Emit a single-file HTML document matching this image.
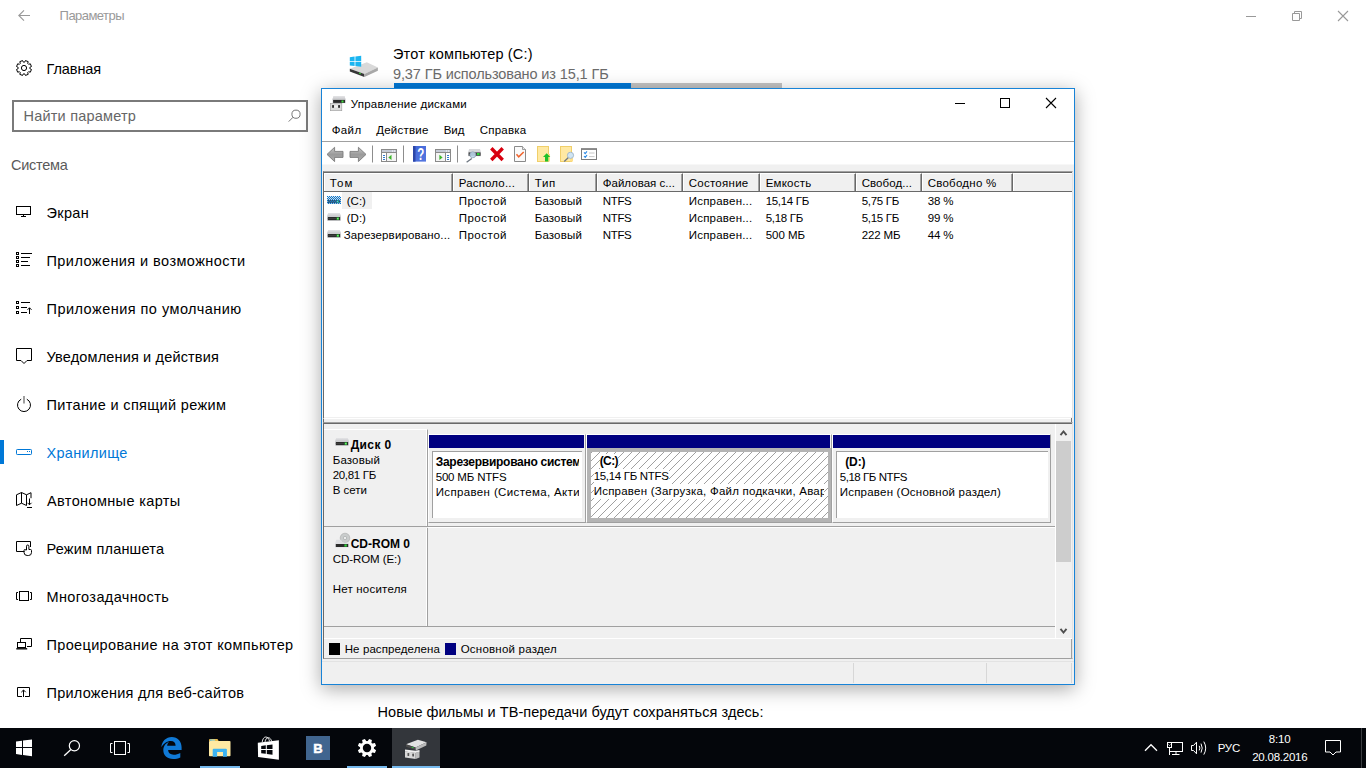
<!DOCTYPE html>
<html><head><meta charset="utf-8">
<style>
*{box-sizing:border-box;margin:0;padding:0}
html,body{width:1366px;height:768px;overflow:hidden;background:#fff;font-family:"Liberation Sans",sans-serif;}
.a{position:absolute;white-space:nowrap}
.t{position:absolute;white-space:nowrap;overflow:visible}
.n{font-size:14.5px;color:#000;line-height:20px;height:20px;margin-top:1px}
.d{font-size:11.5px;color:#000;line-height:15px;height:15px}
.b{font-weight:bold;font-size:12px}
svg{position:absolute;overflow:visible}
</style></head><body>
<!-- SETTINGS -->
<div class="t" style="left: 59.6px; top: 8px; font-size: 13px; color: rgb(153, 153, 153); line-height: 16px; letter-spacing: -0.54px;">Параметры</div>
<div class="t n" style="left: 46.5px; top: 58px; letter-spacing: -0.08px;">Главная</div>
<div class="a" style="left:12px;top:100px;width:296px;height:32px;border:2px solid #7a7a7a"></div>
<div class="t n" style="left: 23.5px; top: 105px; color: rgb(102, 102, 102); letter-spacing: 0.21px;">Найти параметр</div>
<div class="t n" style="left: 11px; top: 154px; color: rgb(90, 90, 90); letter-spacing: -0.25px;">Система</div>
<div class="t n" style="left: 46.5px; top: 202px; letter-spacing: 0.34px;">Экран</div>
<div class="t n" style="left: 46.5px; top: 250px; letter-spacing: 0.43px;">Приложения и возможности</div>
<div class="t n" style="left: 46.5px; top: 298px; letter-spacing: 0.47px;">Приложения по умолчанию</div>
<div class="t n" style="left: 46.5px; top: 346px; letter-spacing: 0.16px;">Уведомления и действия</div>
<div class="t n" style="left: 46.5px; top: 394px; letter-spacing: 0.34px;">Питание и спящий режим</div>
<div class="t n" style="left: 46.5px; top: 442px; color: rgb(0, 120, 215); letter-spacing: 0.31px;">Хранилище</div>
<div class="a" style="left:0;top:440px;width:4px;height:24px;background:#0078d7"></div>
<div class="t n" style="left: 47px; top: 490px; letter-spacing: 0.37px;">Автономные карты</div>
<div class="t n" style="left: 46.5px; top: 538px; letter-spacing: 0.2px;">Режим планшета</div>
<div class="t n" style="left: 46.5px; top: 586px; letter-spacing: 0.37px;">Многозадачность</div>
<div class="t n" style="left: 46.5px; top: 634px; letter-spacing: 0.35px;">Проецирование на этот компьютер</div>
<div class="t n" style="left: 46.5px; top: 682px; letter-spacing: 0.23px;">Приложения для веб-сайтов</div>
<!-- content -->
<div class="t n" style="left: 393px; top: 43px; letter-spacing: 0.16px;">Этот компьютер (C:)</div>
<div class="t n" style="left: 393px; top: 63px; color: rgb(107, 107, 107); letter-spacing: -0.12px;">9,37 ГБ использовано из 15,1 ГБ</div>
<div class="a" style="left:394px;top:83px;width:388px;height:5px;background:#c4c4c4"></div>
<div class="a" style="left:394px;top:83px;width:237px;height:5px;background:#0078d7"></div>
<div class="t n" style="left: 377.5px; top: 701px; letter-spacing: 0.06px;">Новые фильмы и ТВ-передачи будут сохраняться здесь:</div>
<!-- settings icons -->
<style>.k path,.k rect,.k circle{fill:none;stroke:#000;stroke-width:1}</style>
<svg style="left:18px;top:10px" width="13" height="12"><path d="M12 5.5H.8M6 .3L.8 5.500 6 10.700" stroke="#999" fill="none" stroke-width="1.100"></path></svg>
<svg class="k" style="left:16px;top:60px" width="16" height="16"><path d="M8.650 2.140L9.480 .550L12.220 1.680L11.690 3.400L12.600 4.310L14.320 3.780L15.450 6.520L13.860 7.350L13.860 8.650L15.450 9.480L14.320 12.220L12.600 11.690L11.690 12.600L12.220 14.320L9.480 15.450L8.650 13.860L7.350 13.860L6.520 15.450L3.780 14.320L4.310 12.600L3.400 11.690L1.680 12.220L.550 9.480L2.140 8.650L2.140 7.350L.550 6.520L1.680 3.780L3.400 4.310L4.310 3.400L3.780 1.680L6.520 .550L7.350 2.140z" stroke-linejoin="round"></path><circle cx="8" cy="8" r="2.600"></circle></svg>
<svg style="left:288px;top:109px" width="14" height="14"><circle cx="8" cy="5.200" r="4.100" stroke="#777" fill="none"></circle><path d="M5.100 8.200L.7 12.600" stroke="#777" fill="none"></path></svg>
<!-- settings window controls -->
<svg style="left:1246px;top:10px" width="105" height="13"><path d="M0 6.500H10" stroke="#999" fill="none"></path><path d="M46.500 3.500h7v7h-7zM48.500 3.500v-2h7v7h-2" stroke="#999" fill="none"></path><path d="M92 1l10 10M102 1l-10 10" stroke="#999" fill="none" stroke-width="1.100"></path></svg>
<!-- nav icons -->
<svg class="k" style="left:16px;top:206px" width="16" height="12"><rect x=".5" y=".5" width="14" height="8"></rect><path d="M7.500 8.500v2M5 10.500h5"></path></svg>
<svg class="k" style="left:16px;top:252px" width="16" height="16"><rect x=".5" y=".5" width="2" height="2"></rect><rect x=".5" y="4.500" width="2" height="2"></rect><rect x=".5" y="8.500" width="2" height="2"></rect><rect x=".5" y="12.500" width="2" height="2"></rect><path d="M5 1.500h11M5 5.500h9M5 9.500h7M5 13.500h9"></path></svg>
<svg class="k" style="left:16px;top:301px" width="16" height="14"><rect x=".5" y=".5" width="2" height="2"></rect><rect x=".5" y="5.500" width="2" height="2"></rect><rect x=".5" y="10.500" width="2" height="2"></rect><path d="M5 1.500h9M5 6.500h6M5 11.500h6M13.500 13V6.800M11.500 8.800l2-2 2 2"></path></svg>
<svg class="k" style="left:16px;top:348px" width="16" height="16"><path d="M.5.500h15v12h-4.500l-3 3-3-3h-4.500z"></path></svg>
<svg class="k" style="left:16px;top:396px" width="16" height="17"><path d="M5.200 3.200A6.500 6.500 0 1 0 10.800 3.200"></path><path d="M8 0v7.600" style="stroke:#777;stroke-width:1.400"></path></svg>
<svg style="left:16px;top:449px" width="16" height="7"><rect x=".5" y=".5" width="15" height="5" rx=".8" stroke="#0078d7" fill="none"></rect><path d="M11 2.500h1M13 2.500h1" stroke="#0078d7" fill="none"></path></svg>
<svg class="k" style="left:16px;top:492px" width="16" height="16"><path d="M.5 2.800L5.500.5l5 2.300 4.500-2.100v5.500M.5 2.800v10.700l5-2.300 5 2.300M5.500.5v10.700M10.500 2.800v10.700"></path><path d="M13.500 6.500v6.300M11.500 10.800l2 2 2-2M11 15.500h5"></path></svg>
<svg class="k" style="left:16px;top:541px" width="16" height="15"><path d="M8.500 10.500H.5V.5h14v5.500"></path><path d="M10.500 9V5.200a1.200 1.200 0 0 1 2.400 0V8.500h1.600a1 1 0 0 1 1 1v2a3 3 0 0 1-3 3h-1.300a3.200 3.200 0 0 1-3.200-3.200V9.500a1 1 0 0 1 2 0"></path></svg>
<svg class="k" style="left:16px;top:591px" width="16" height="10"><rect x="3.500" y=".5" width="9" height="9"></rect><path d="M2 1.500H.5v7H2M14 1.500h1.500v7H14"></path></svg>
<svg class="k" style="left:16px;top:638px" width="16" height="12"><path d="M4.500 4V.5h11v8H11"></path><rect x="1.500" y="4.500" width="8" height="5"></rect><path d="M.3 10.800h10.900" style="stroke-width:1.400"></path></svg>
<svg class="k" style="left:17px;top:687px" width="13" height="10"><path d="M5 9.500H.5v-9h12v9H8M6.500 10V3.200M4.300 5.200l2.200-2.200 2.200 2.200"></path></svg>
<!-- drive icon -->
<svg style="left:349px;top:54px" width="30" height="24"><path fill="#d9d9d9" d="M.8 14.700L17.800 8.200 28.900 13.500 15.400 20z"></path><path fill="#1ab5f1" d="M.8 3.300l4.800-.7V7H.8zM6.400 2.500l5.800-.7V7H6.400zM.8 7.800h4.800V12l-4.800-.6zM6.400 7.800h5.800v5l-5.800-.7z"></path><path fill="#383838" d="M.8 14.700L15.400 20v2.900L.8 17.600z"></path><path fill="#a9a9a9" d="M15.400 20L28.900 13.500v3.200L15.400 22.900z"></path><rect x="10" y="18.800" width="1.800" height="1.100" fill="#3d3" transform="rotate(20 10.900 19.300)"></rect></svg>
<!-- DISK MGMT WINDOW -->
<div class="a" style="left:321px;top:88px;width:754px;height:597px;background:#f0f0f0;border:1px solid #1883d7;box-shadow:0 4px 18px rgba(0,0,0,.34)"></div>
<div class="a" style="left:322px;top:89px;width:752px;height:75px;background:#fff"></div>
<div class="a" style="left:322px;top:141px;width:752px;height:1px;background:#a0a0a0"></div>
<div class="a" style="left:322px;top:164px;width:752px;height:1px;background:#f7f7f7"></div>
<div class="t d" style="left: 350.7px; top: 97px; letter-spacing: 0.24px;">Управление дисками</div>
<!-- window buttons -->
<svg style="left:955px;top:98px" width="110" height="12"><path d="M0 5.5H10" stroke="#000" fill="none"></path><rect x="45.5" y=".5" width="9" height="9" stroke="#000" fill="none"></rect><path d="M91 0l10 10M101 0L91 10" stroke="#000" fill="none" stroke-width="1.1"></path></svg>
<!-- menu -->
<div class="t d" style="left: 331.7px; top: 123px; letter-spacing: 0.38px;">Файл</div>
<div class="t d" style="left: 376.2px; top: 123px; letter-spacing: 0.22px;">Действие</div>
<div class="t d" style="left: 443.7px; top: 123px; letter-spacing: -0.01px;">Вид</div>
<div class="t d" style="left: 479.7px; top: 123px; letter-spacing: 0.24px;">Справка</div>
<!-- list frame -->
<div class="a" style="left:323px;top:171px;width:750px;height:248px;background:#fff;border-top:1px solid #a0a0a0;border-left:1px solid #696969;border-right:1px solid #e3e3e3;border-bottom:1px solid #fff"></div>
<div class="a" style="left:324px;top:172px;width:748px;height:1px;background:#696969"></div>
<div class="a" style="left:324px;top:417px;width:748px;height:2px;background:#f0f0f0"></div>
<!-- header -->
<div class="a" style="left:324px;top:173px;width:748px;height:19px;background:#696969"></div>
<style>.h{position:absolute;top:173px;height:18px;background:#f0f0f0;border-left:1px solid #fff;border-top:1px solid #fff;border-right:1px solid #696969;box-shadow:inset -1px 0 #a0a0a0}</style>
<div class="h" style="left:324px;width:129px"></div>
<div class="h" style="left:453px;width:76px"></div>
<div class="h" style="left:529px;width:68px"></div>
<div class="h" style="left:597px;width:86px"></div>
<div class="h" style="left:683px;width:77px"></div>
<div class="h" style="left:760px;width:96px"></div>
<div class="h" style="left:856px;width:66px"></div>
<div class="h" style="left:922px;width:91px"></div>
<div class="h" style="left:1013px;width:59px;border-right:none;box-shadow:none"></div>
<div class="t d" style="left: 329.7px; top: 176px; letter-spacing: 1.12px;">Том</div>
<div class="t d" style="left: 458.7px; top: 176px; letter-spacing: 0.17px;">Располо...</div>
<div class="t d" style="left: 534.7px; top: 176px; letter-spacing: 0.71px;">Тип</div>
<div class="t d" style="left: 602.7px; top: 176px; letter-spacing: 0.03px;">Файловая с...</div>
<div class="t d" style="left: 688.7px; top: 176px; letter-spacing: 0.27px;">Состояние</div>
<div class="t d" style="left: 765.7px; top: 176px; letter-spacing: 0.23px;">Емкость</div>
<div class="t d" style="left: 861.7px; top: 176px; letter-spacing: 0.06px;">Свобод...</div>
<div class="t d" style="left: 927.7px; top: 176px; letter-spacing: 0.25px;">Свободно %</div>
<!-- rows -->
<div class="a" style="left:342px;top:192px;width:30px;height:17px;background:#f0f0f0"></div>
<div class="t d" style="left: 346.7px; top: 194px; letter-spacing: 0.03px;">(C:)</div>
<div class="t d" style="left: 346.7px; top: 211px; letter-spacing: 0.03px;">(D:)</div>
<div class="t d" style="left: 343.7px; top: 228px; letter-spacing: 0.16px;">Зарезервировано...</div>
<div class="t d" style="left: 458.7px; top: 194px; letter-spacing: 0.5px;">Простой</div>
<div class="t d" style="left: 458.7px; top: 211px; letter-spacing: 0.5px;">Простой</div>
<div class="t d" style="left: 458.7px; top: 228px; letter-spacing: 0.5px;">Простой</div>
<div class="t d" style="left: 534.7px; top: 194px; letter-spacing: 0.16px;">Базовый</div>
<div class="t d" style="left: 534.7px; top: 211px; letter-spacing: 0.16px;">Базовый</div>
<div class="t d" style="left: 534.7px; top: 228px; letter-spacing: 0.16px;">Базовый</div>
<div class="t d" style="left: 602.7px; top: 194px; letter-spacing: -0.31px;">NTFS</div>
<div class="t d" style="left: 602.7px; top: 211px; letter-spacing: -0.31px;">NTFS</div>
<div class="t d" style="left: 602.7px; top: 228px; letter-spacing: -0.31px;">NTFS</div>
<div class="t d" style="left: 688.7px; top: 194px; letter-spacing: 0.22px;">Исправен...</div>
<div class="t d" style="left: 688.7px; top: 211px; letter-spacing: 0.22px;">Исправен...</div>
<div class="t d" style="left: 688.7px; top: 228px; letter-spacing: 0.22px;">Исправен...</div>
<div class="t d" style="left: 765.7px; top: 194px; letter-spacing: -0.31px;">15,14 ГБ</div>
<div class="t d" style="left: 765.7px; top: 211px; letter-spacing: -0.3px;">5,18 ГБ</div>
<div class="t d" style="left: 765.7px; top: 228px; letter-spacing: -0.04px;">500 МБ</div>
<div class="t d" style="left: 861.7px; top: 194px; letter-spacing: -0.3px;">5,75 ГБ</div>
<div class="t d" style="left: 861.7px; top: 211px; letter-spacing: -0.3px;">5,15 ГБ</div>
<div class="t d" style="left: 861.7px; top: 228px; letter-spacing: -0.12px;">222 МБ</div>
<div class="t d" style="left: 927.7px; top: 194px; letter-spacing: -0.11px;">38 %</div>
<div class="t d" style="left: 927.7px; top: 211px; letter-spacing: -0.11px;">99 %</div>
<div class="t d" style="left: 927.7px; top: 228px; letter-spacing: -0.11px;">44 %</div>
<!-- splitter + lower pane frame -->
<div class="a" style="left:323px;top:419px;width:1px;height:4px;background:#696969"></div>
<div class="a" style="left:324px;top:418px;width:747px;height:1px;background:#fff"></div>
<div class="a" style="left:1070.5px;top:418px;width:1.5px;height:5px;background:#787878"></div>
<div class="a" style="left:323px;top:422px;width:750px;height:237px;border-top:1px solid #a0a0a0;border-left:1px solid #696969;border-right:1px solid #e3e3e3;border-bottom:1px solid #a0a0a0"></div>
<div class="a" style="left:324px;top:423px;width:748px;height:1px;background:#696969"></div>
<!-- disk 0 label -->
<div class="a" style="left:324px;top:429px;width:104px;height:98px;border-top:1px solid #fff;border-right:1px solid #a0a0a0;border-bottom:1px solid #a0a0a0;box-shadow:inset -1px 0 #fff"></div>
<div class="a" style="left:428px;top:526px;width:627px;height:1px;background:#a0a0a0"></div>
<div class="a" style="left:428px;top:527px;width:627px;height:1px;background:#fff"></div>
<div class="t d b" style="left: 350.7px; top: 438px; letter-spacing: 0.37px;">Диск 0</div>
<div class="t d" style="left: 332.7px; top: 453px; letter-spacing: 0.16px;">Базовый</div>
<div class="t d" style="left: 332.7px; top: 468px; letter-spacing: -0.31px;">20,81 ГБ</div>
<div class="t d" style="left: 332.7px; top: 483px; letter-spacing: -0.01px;">В сети</div>
<!-- partition 1 -->
<style>.po{position:absolute;top:434px;height:89px;border-left:1px solid #fff;border-top:1px solid #fff;border-right:1px solid #a0a0a0;border-bottom:1px solid #a0a0a0}
.pb{position:absolute;top:435px;height:13px;background:#000080}
.pi{position:absolute;top:451px;height:67px;background:#fff;border-left:1px solid #a0a0a0;border-top:1px solid #a0a0a0;overflow:hidden}
.pi .t{background:#fff}</style>
<div class="po" style="left:428px;width:158px"></div>
<div class="pb" style="left:429px;width:155px"></div>
<div class="pi" style="left:432px;width:150px">
<div class="t d b" style="left: 2.7px; top: 3px; letter-spacing: -0.27px;">Зарезервировано систем</div>
<div class="t d" style="left: 2.7px; top: 18px; letter-spacing: -0.18px;">500 МБ NTFS</div>
<div class="t d" style="left: 2.7px; top: 33px; letter-spacing: 0.36px;">Исправен (Система, Акти</div>
<div class="a" style="left:146px;top:0;width:4px;height:67px;background:#fff"></div>
</div>
<!-- partition C (selected, hatched) -->
<div class="po" style="left:586px;width:246px"></div>
<div class="pb" style="left:587px;width:243px"></div>
<div class="a" style="left:587px;top:448px;width:244px;height:74px;background:#b4b4b4"></div>
<div class="a" style="left:591px;top:452px;width:237px;height:66px;overflow:hidden;background:#fff"><svg style="left:0;top:0" width="237" height="66"><rect width="237" height="66" fill="url(#hat)"></rect></svg>
<div class="t d b" style="left: 8.7px; top: 2px; background: rgb(255, 255, 255); letter-spacing: -0.58px;">(C:)</div>
<div class="t d" style="left: 2.7px; top: 17px; background: rgb(255, 255, 255); letter-spacing: -0.32px;">15,14 ГБ NTFS</div>
<div class="t d" style="left: 2.7px; top: 32px; background: rgb(255, 255, 255); letter-spacing: 0.23px;">Исправен (Загрузка, Файл подкачки, Авар</div>
<svg style="left:233px;top:0;overflow:hidden" width="4" height="66"><rect width="4" height="66" fill="#fff"></rect><g transform="translate(-233,0)"><rect width="237" height="66" fill="url(#hat)"></rect></g></svg>
</div>
<!-- partition D -->
<div class="po" style="left:832px;width:219px"></div>
<div class="pb" style="left:833px;width:217px"></div>
<div class="pi" style="left:836px;width:212px">
<div class="t d b" style="left: 8.2px; top: 3px; letter-spacing: -0.08px;">(D:)</div>
<div class="t d" style="left: 2.7px; top: 18px; letter-spacing: -0.44px;">5,18 ГБ NTFS</div>
<div class="t d" style="left: 2.7px; top: 33px; letter-spacing: 0.22px;">Исправен (Основной раздел)</div>
</div>
<!-- cdrom -->
<div class="a" style="left:324px;top:528px;width:104px;height:99px;border-right:1px solid #a0a0a0;border-bottom:1px solid #a0a0a0;box-shadow:inset -1px 0 #fff"></div>
<div class="a" style="left:428px;top:626px;width:627px;height:1px;background:#a0a0a0"></div>
<div class="t d b" style="left: 350.7px; top: 537px;">CD-ROM 0</div>
<div class="t d" style="left: 332.7px; top: 552px; letter-spacing: -0.06px;">CD-ROM (E:)</div>
<div class="t d" style="left: 332.7px; top: 582px; letter-spacing: 0.21px;">Нет носителя</div>
<!-- scrollbar -->
<div class="a" style="left:1055px;top:424px;width:17px;height:214px;background:#f0f0f0"></div>
<div class="a" style="left:1056px;top:441px;width:15px;height:121px;background:#cdcdcd"></div>
<svg style="left:1059px;top:429px" width="9" height="8"><path d="M1.500 6.200L4.500 2.500l3 3.700" stroke="#505050" stroke-width="1.900" fill="none"></path></svg>
<svg style="left:1059px;top:627px" width="9" height="8"><path d="M1.500 1.800L4.500 5.500l3-3.700" stroke="#505050" stroke-width="1.900" fill="none"></path></svg>
<div class="a" style="left:1055px;top:424px;width:1px;height:215px;background:#fff"></div>
<!-- legend -->
<div class="a" style="left:324px;top:638px;width:748px;height:1px;background:#fff"></div>
<div class="a" style="left:1071px;top:639px;width:1px;height:20px;background:#a0a0a0"></div>
<div class="a" style="left:329px;top:643px;width:11px;height:12px;background:#000"></div>
<div class="a" style="left:445px;top:643px;width:11px;height:12px;background:#000080"></div>
<div class="t d" style="left: 344.7px; top: 642px; letter-spacing: 0.1px;">Не распределена</div>
<div class="t d" style="left: 460.7px; top: 642px; letter-spacing: 0.22px;">Основной раздел</div>
<!-- status bar -->
<div class="a" style="left:322px;top:661px;width:752px;height:1px;background:#e3e3e3"></div>
<div class="a" style="left:853px;top:663px;width:1px;height:20px;background:#d7d7d7"></div>
<div class="a" style="left:986px;top:663px;width:1px;height:20px;background:#d7d7d7"></div>
<div class="a" style="left:1071px;top:663px;width:1px;height:20px;background:#d7d7d7"></div>
<!-- DM icons -->
<svg width="0" height="0" style="left:0;top:0"><defs>
<linearGradient id="gTop" x1="0" y1="0" x2="0" y2="1"><stop offset="0" stop-color="#e4e4e6"></stop><stop offset="1" stop-color="#c4c5c8"></stop></linearGradient>
<linearGradient id="gArr" x1="0" y1="0" x2="0" y2="1"><stop offset="0" stop-color="#c9c9c9"></stop><stop offset=".5" stop-color="#9a9a9a"></stop><stop offset="1" stop-color="#b0b0b0"></stop></linearGradient>
<linearGradient id="gHelp" x1="0" y1="0" x2="1" y2="1"><stop offset="0" stop-color="#3f66d8"></stop><stop offset="1" stop-color="#5577e0"></stop></linearGradient>
<symbol id="drv" viewBox="0 0 14 8" overflow="visible"><path d="M1.200 0h11.600L14 3.700v4.300H0V3.700z" fill="#dfe0e3"></path><path d="M1.200 0h11.600L14 3.700H0z" fill="url(#gTop)"></path><rect x=".8" y="4" width="12.400" height="3.200" fill="#2b2b2b"></rect><rect x=".8" y="5.200" width="8.500" height=".8" fill="#444"></rect><rect x="9.600" y="4.400" width="2.400" height="2.400" fill="#2fbe3a"></rect><rect x="10.200" y="5" width="1.200" height="1.200" fill="#7dff7d"></rect></symbol>
<pattern id="chk" width="2" height="2" patternUnits="userSpaceOnUse"><rect x="0" y="0" width="1" height="1" fill="#0078d7"></rect><rect x="1" y="1" width="1" height="1" fill="#0078d7"></rect></pattern>
<pattern id="hat" width="8" height="8" patternUnits="userSpaceOnUse" patternTransform="translate(1,0)" shape-rendering="crispEdges"><path d="M7 0h1v1H7zM6 1h1v1H6zM5 2h1v1H5zM4 3h1v1H4zM3 4h1v1H3zM2 5h1v1H2zM1 6h1v1H1zM0 7h1v1H0z" fill="#a0a0a0"></path></pattern>
</defs></svg>
<!-- title icon -->
<svg style="left:330px;top:96px" width="16" height="15"><path d="M3.500 0h11l1.200 3.700v3.500H2.300V3.700z" fill="#dfe0e3"></path><path d="M3.500 0h11l1.200 3.700H2.300z" fill="url(#gTop)"></path><rect x="3.100" y="3.900" width="12" height="3" fill="#2b2b2b"></rect><rect x="11.500" y="4.500" width="2" height="2" fill="#3fdc3f"></rect><rect x=".3" y="7.500" width="11.500" height="7.200" fill="#dcdcdc" stroke="#9b9b9b" stroke-width=".6"></rect><rect x="2.100" y="9.100" width="1.900" height="2.700" fill="#2e2e2e"></rect><rect x="8.100" y="9.100" width="1.900" height="2.700" fill="#2e2e2e"></rect><rect x="4.300" y="9.500" width="3.500" height="2" fill="#f4f4f4"></rect></svg>
<!-- row icons -->
<svg style="left:327px;top:196px" width="14" height="8"><use href="#drv" width="14" height="8"></use><rect width="14" height="8" fill="#fff" opacity=".15"></rect><rect width="14" height="8" fill="url(#chk)"></rect></svg>
<svg style="left:327px;top:213px" width="14" height="8"><use href="#drv" width="14" height="8"></use></svg>
<svg style="left:327px;top:230px" width="14" height="8"><use href="#drv" width="14" height="8"></use></svg>
<svg style="left:335px;top:438px" width="14" height="8"><use href="#drv" width="14" height="8"></use></svg>
<!-- cdrom icon -->
<svg style="left:335px;top:533px" width="15" height="15"><circle cx="10" cy="5" r="4.800" fill="#c9cccc" stroke="#aaa" stroke-width=".6"></circle><circle cx="10" cy="5" r="2" fill="#b4b7b7"></circle><circle cx="10" cy="5" r="1" fill="#fff"></circle><path d="M1.200 6.800H6a4.600 4.600 0 0 0 7 2l1 2.200v3.400H0V11z" fill="#dfe0e3"></path><rect x=".8" y="11" width="12.400" height="3" fill="#2b2b2b"></rect><rect x="9.400" y="11.400" width="2.400" height="2.200" fill="#2fd23a"></rect></svg>
<!-- toolbar -->
<svg style="left:322px;top:142px" width="300" height="22">
<path d="M5 12.400L12.600 5.300v4.100H21v6H12.600v4.200z" fill="url(#gArr)" stroke="#7a7a7a" stroke-width=".9" stroke-linejoin="round"></path>
<path d="M44 12.400L36.400 5.300v4.100H28v6h8.400v4.200z" fill="url(#gArr)" stroke="#7a7a7a" stroke-width=".9" stroke-linejoin="round"></path>
<path d="M50.500 3.500v17M81.500 3.500v17M135.500 3.500v17" stroke="#8d8d8d"></path>
<!-- icon3 -->
<g transform="translate(59,7)"><rect x=".5" y=".5" width="15" height="12" fill="#f4f4f4" stroke="#8a8a8a"></rect><rect x="1" y="1" width="14" height="2" fill="#c5cad6"></rect><path d="M1 3.500h14M5.500 4v8.500" stroke="#8a8a8a"></path><rect x="1" y="4" width="4" height="8" fill="#fff"></rect><path d="M2 6.500h2M2 8.500h2M2 10.500h2" stroke="#2f79d1"></path><path d="M7.300 8.400l3.200-2.600v5.200z" fill="#3cb52c"></path><rect x="11" y="1.500" width="1" height="1" fill="#fff"></rect><rect x="13" y="1.500" width="1" height="1" fill="#fff"></rect></g>
<!-- help -->
<g transform="translate(91,4)"><rect width="13" height="15.600" fill="url(#gHelp)"></rect><rect width="2.500" height="15.600" fill="#2c47a8"></rect><text transform="translate(7.7,13.6) scale(.72,1)" text-anchor="middle" font-family="Liberation Sans" font-weight="bold" font-size="16" fill="#fff">?</text></g>
<!-- icon5 -->
<g transform="translate(113,7)"><rect x=".5" y=".5" width="15" height="12" fill="#f4f4f4" stroke="#8a8a8a"></rect><rect x="1" y="1" width="14" height="2" fill="#c5cad6"></rect><path d="M1 3.500h14M10.500 4v8.500" stroke="#8a8a8a"></path><rect x="11" y="4" width="4" height="8" fill="#fff"></rect><path d="M12 6.500h2M12 8.500h2M12 10.500h2" stroke="#2f79d1"></path><path d="M7.600 8.400L4.400 5.800v5.200z" fill="#3cb52c"></path><rect x="11" y="1.500" width="1" height="1" fill="#fff"></rect><rect x="13" y="1.500" width="1" height="1" fill="#fff"></rect></g>
<!-- icon6 drive+magnifier -->
<g transform="translate(144,7)"><path d="M3.200 0h10.800l1 3.200v4H2V3.200z" fill="#d6d7da"></path><rect x="2.600" y="3.400" width="12" height="3.400" fill="#3a3a3a"></rect><rect x="11" y="4" width="2.600" height="2.200" fill="#2fd23a"></rect><path d="M5.800 9.500L.6 13.300" stroke="#6d7680" stroke-width="1.300"></path><circle cx="6.800" cy="5.800" r="3" fill="#bcd6ea" fill-opacity=".9" stroke="#8fa3b5" stroke-width=".8"></circle></g>
<!-- red X -->
<path d="M169.300 6.300L180.700 18M180.700 6.300L169.300 18" stroke="#d8000f" stroke-width="3.400"></path>
<!-- icon8 page w/ check -->
<g transform="translate(192,4)"><path d="M.5.500h8l3 3v12h-11z" fill="#fafafa" stroke="#8a8a8a"></path><path d="M8.500.5v3h3" fill="#e8e8e8" stroke="#8a8a8a" stroke-width=".8"></path><path d="M2.500 8.300l2.200 2.500L9.700 6" stroke="#f0642d" stroke-width="1.500" fill="none"></path></g>
<!-- icon9 yellow + up arrow -->
<g transform="translate(215,4)"><rect x=".5" y=".5" width="11" height="15" fill="#ffe9a3" stroke="#f0cf6a"></rect><rect x="10" y="8" width="3" height="7.500" fill="#ffe08a"></rect><path d="M9.700 7.200L13.300 11h-2v4.600H8V11H6z" fill="#1fc128"></path></g>
<!-- icon10 yellow + magnifier -->
<g transform="translate(238,4)"><rect x=".5" y=".5" width="11" height="15" fill="#ffe9a3" stroke="#f0cf6a"></rect><rect x="10" y="12" width="3" height="3.500" fill="#ffe08a"></rect><path d="M8.400 11.600L4.200 15.400" stroke="#6d7680" stroke-width="1.300"></path><circle cx="10.500" cy="9.300" r="3.100" fill="#cfe4f2" stroke="#9fb4c6" stroke-width=".9"></circle></g>
<!-- icon11 checklist -->
<g transform="translate(259,6)"><rect x=".5" y="1" width="15" height="10.500" fill="#fff" stroke="#7c7c7c"></rect><rect x="0" y=".3" width="16" height="1.500" fill="#7c7c7c"></rect><path d="M3 4.300l1.200 1.300 1.800-2.200M3 8l1.200 1.300 1.800-2.200" stroke="#2d8be6" stroke-width="1.100" fill="none"></path><path d="M8 5h5.500M8 8.600h5.500" stroke="#c8c8c8" stroke-width="1"></path></g>
</svg>
<!-- TASKBAR -->
<div class="a" style="left:0;top:728px;width:1366px;height:40px;background:#04060b"></div>
<div class="a" style="left:392px;top:728px;width:48px;height:40px;background:#33363b"></div>
<div class="a" style="left:200px;top:766px;width:40px;height:2px;background:#76b9ed"></div>
<div class="a" style="left:347px;top:766px;width:40px;height:2px;background:#76b9ed"></div>
<div class="a" style="left:392px;top:766px;width:48px;height:2px;background:#76b9ed"></div>
<!-- start -->
<svg style="left:16px;top:739px" width="16" height="18"><path fill="#fff" d="M0 2.500l6-.8V8H0zM7 1.600L16 .6V8H7zM0 9h6v7l-6-1.100zM7 9h9v8.200L7 16z"></path></svg>
<!-- search -->
<svg style="left:62px;top:738px" width="20" height="20"><circle cx="12.4" cy="7.7" r="5.1" stroke="#fff" stroke-width="1.2" fill="none"></circle><path d="M8.9 11.5L2.2 17.8" stroke="#fff" stroke-width="1.3" fill="none"></path></svg>
<!-- task view -->
<svg style="left:109px;top:740px" width="22" height="16"><rect x="5.5" y="1.5" width="11" height="13" stroke="#fff" fill="none"></rect><path d="M3.5 3.5h-2v9h2M18.5 3.5h2v9h-2" stroke="#fff" fill="none"></path></svg>
<!-- edge -->
<svg style="left:161px;top:737px" width="21" height="22" viewBox="0 0 21 22"><path fill="#1079d6" d="M.3 10.2C1 4.2 5 0 10.8 0c5.900 0 9.800 4.300 9.800 10.300v2.800H7.100c.1 2.900 2.300 4.600 5.600 4.600 2.300 0 4.400-.6 6.600-1.800v4.600c-2.100 1-4.500 1.500-7.200 1.500-6 0-9.800-3.600-9.800-8.900 0-3.900 2.300-6.900 5.700-8.400-1 1.100-1.700 2.500-1.900 4h8.500c0-2.900-1.700-4.700-4.800-4.700C6.000 4.000 2.300 6.700.3 10.200z"></path></svg>
<!-- explorer -->
<svg style="left:209px;top:738px" width="22" height="20" viewBox="0 0 22 20"><path fill="#e9b949" d="M0 1.800C0 1.300.4 1 .9 1h7.600l1.300 2.200H0z"></path><rect x="0" y="3" width="21.500" height="15.200" rx=".8" fill="#ffe9a2"></rect><rect x="1.200" y="1.600" width="4.800" height="1" fill="#8fe0f0"></rect><rect x="1.200" y="1.600" width="1.200" height="1" fill="#3bb4e8"></rect><path fill="#3cb3f2" d="M3.700 11.700a1 1 0 0 1 1-1h12.200a1 1 0 0 1 1 1V18.800H14V14H8.100v4.800H3.700z"></path></svg>
<!-- store -->
<svg style="left:257px;top:736px" width="23" height="24" viewBox="0 0 23 24"><path d="M5.200 6.200C5.500 3 7 1 8.800 1s3.300 1.700 3.700 4.400M8 5.900C8.400 3.200 9.800 1.700 11.300 1.700s2.800 1.400 3.300 3.600" stroke="#fff" stroke-width=".9" fill="none"></path><path fill="#fff" d="M.8 6.800L21.900 4.200V23.700L1.100 20.900z"></path><path fill="#04060b" d="M4.200 9.900l4.600-.6V13H4.200zM9.800 9.200l5.700-.7V13H9.800zM4.200 14h4.600v3.800l-4.600-.5zM9.800 14h5.700v4.800L9.800 18z"></path></svg>
<!-- vk -->
<div class="a" style="left:306px;top:736px;width:24px;height:24px;background:#41658f"></div>
<div class="a" style="left:306px;top:736px;width:24px;height:24px;line-height:24px;text-align:center;color:#fff;font-weight:bold;font-size:13px;-webkit-text-stroke:.5px #fff;padding-top:.5px">В</div>
<!-- gear -->
<svg style="left:357px;top:738px" width="20" height="20" viewBox="-10 -10 20 20"><g fill="#fff" transform="rotate(22.5)"><circle r="6.900"></circle><g id="tg"><path d="M-1.500-9.200h3l.7 3.600h-4.400zM-1.500 9.200h3l.7-3.600h-4.400z"></path></g><use href="#tg" transform="rotate(45)"></use><use href="#tg" transform="rotate(90)"></use><use href="#tg" transform="rotate(135)"></use></g><circle r="4.200" fill="#04060b"></circle></svg>
<!-- diskmgmt taskbar icon -->
<svg style="left:404px;top:739px" width="24" height="21" viewBox="0 0 24 21"><path fill="#e2e2e2" d="M2 5.300L13.900.7l8.700 2.600L11.500 8.500z"></path><path fill="#4a4a4a" d="M2 5.300l9.500 3.200v2.400L2 7.800z"></path><path fill="#b9b9b9" d="M11.500 8.500L22.600 3.300l-.3 3.200L11.800 11.500z"></path><rect x="7.600" y="8" width="2" height="1" fill="#2fbf3a" transform="rotate(18 8.600 8.500)"></rect><path fill="#efefef" d="M1 10.500l10.500 1.200 4-.8v2l-4 1L1 12.500z"></path><path fill="#d8d8d8" d="M1 12.300l10.700 1.400v6.200L1 18.500z"></path><path fill="#bdbdbd" d="M11.700 13.700l3.800-1.200v6l-3.800 1.400z"></path><rect x="3.500" y="14" width="1.700" height="3" rx=".6" fill="#555"></rect><rect x="8.300" y="14.600" width="1.700" height="3" rx=".6" fill="#555"></rect></svg>
<!-- tray -->
<svg style="left:1144px;top:743px" width="14" height="9"><path d="M1 7.700L7 1.700l6 6" stroke="#fff" stroke-width="1.300" fill="none"></path></svg>
<svg style="left:1166px;top:741px" width="18" height="15"><rect x="3.500" y="1.500" width="13" height="9" stroke="#fff" fill="none"></rect><path d="M3.500 10.500V14M10 10.500v3M6 13.500h7.500" stroke="#fff" fill="none"></path><rect x="1.500" y="1.500" width="4" height="5" stroke="#fff" fill="#04060b"></rect><path d="M2.500 3.500l1 1 1-1" stroke="#fff" fill="none" stroke-width=".8"></path></svg>
<svg style="left:1190px;top:740px" width="19" height="16"><path d="M1.500 5.500h2l3-3.300v11.600l-3-3.300h-2z" stroke="#fff" fill="none"></path><path d="M9.200 5.800Q10.600 8.100 9.200 10.400M11 3.600Q13.400 8.100 11 12.600M13.800 1.600Q17.600 8.100 13.800 14.600" stroke="#fff" fill="none" stroke-width="1"></path></svg>
<div class="t" style="left: 1217.7px; top: 741px; font-size: 11.5px; line-height: 15px; color: rgb(255, 255, 255); letter-spacing: -0.25px;">РУС</div>
<div class="t" style="left: 1268.7px; top: 732px; font-size: 11.5px; line-height: 15px; color: rgb(255, 255, 255); letter-spacing: -0.15px;">8:10</div>
<div class="t" style="left: 1252.2px; top: 750px; font-size: 11.5px; line-height: 15px; color: rgb(255, 255, 255); letter-spacing: -0.23px;">20.08.2016</div>
<svg style="left:1325px;top:740px" width="17" height="16"><path d="M.5.500h15v11.500h-4.500l-3 3-3-3h-4.500z" stroke="#fff" fill="none"></path></svg>
<div class="a" style="left:1361px;top:728px;width:1px;height:40px;background:#3a3c40"></div>

</body></html>
